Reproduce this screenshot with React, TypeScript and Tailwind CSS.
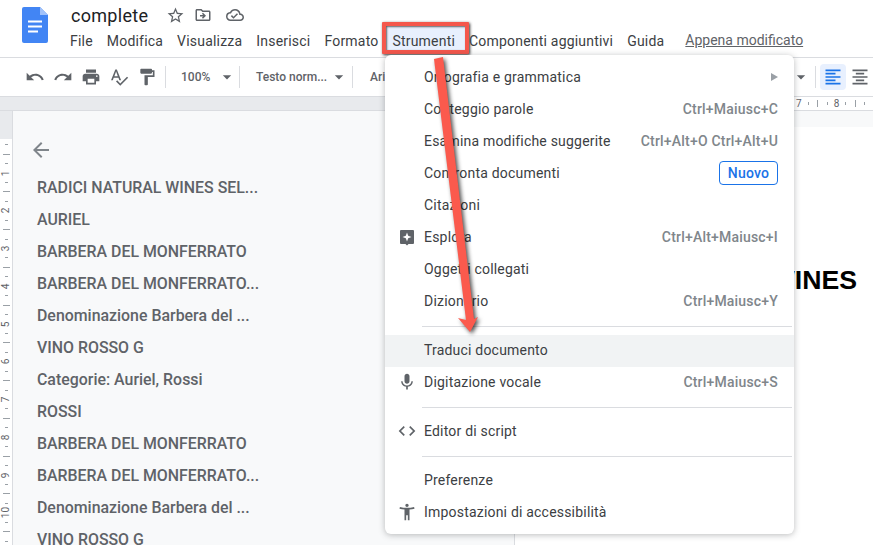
import { ReactNode } from "react";
import {
  MdAccessibilityNew,
  MdArrowBack,
  MdArrowDropDown,
  MdCode,
  MdFormatAlignCenter,
  MdFormatAlignLeft,
  MdFormatPaint,
  MdMic,
  MdOutlineCloudDone,
  MdOutlineDriveFileMove,
  MdPrint,
  MdRedo,
  MdSpellcheck,
  MdStarBorder,
  MdUndo,
} from "react-icons/md";

const menuBar = ["File", "Modifica", "Visualizza", "Inserisci", "Formato", "Strumenti", "Componenti aggiuntivi", "Guida"];

const outline = [
  "RADICI NATURAL WINES SEL...",
  "AURIEL",
  "BARBERA DEL MONFERRATO",
  "BARBERA DEL MONFERRATO...",
  "Denominazione Barbera del ...",
  "VINO ROSSO G",
  "Categorie: Auriel, Rossi",
  "ROSSI",
  "BARBERA DEL MONFERRATO",
  "BARBERA DEL MONFERRATO...",
  "Denominazione Barbera del ...",
  "VINO ROSSO G",
];

function ExploreIcon() {
  return (
    <svg width="16" height="17" viewBox="0 0 16 17">
      <path d="M2 1h12a1 1 0 0 1 1 1v12a1 1 0 0 1-1 1H9.500L8 16.500 6.500 15H2a1 1 0 0 1-1-1V2a1 1 0 0 1 1-1z" fill="#5f6368" />
      <path d="M8 3.500 9.200 6.800 12.500 8 9.200 9.200 8 12.500 6.800 9.200 3.500 8 6.800 6.800z" fill="#fff" />
    </svg>
  );
}

function MenuRow({ label, shortcut, icon, active, lift, right }: { label: string; shortcut?: string; icon?: ReactNode; active?: boolean; lift?: boolean; right?: ReactNode }) {
  return (
    <div className={`flex h-8 items-center pr-4 ${active ? "bg-[#f1f3f4]" : ""} ${lift ? "pb-[2px]" : ""}`}>
      <div className="flex w-[39px] justify-end pr-[6px] text-[#5f6368]">
        <div className="flex w-[22px] justify-center">{icon}</div>
      </div>
      <span className="text-sm tracking-[0.2px] text-[#3c4043]">{label}</span>
      <div className="ml-auto flex items-center text-sm font-medium tracking-[0.2px] text-[#80868b]">
        {shortcut}
        {right}
      </div>
    </div>
  );
}

function Separator({ top, bottom }: { top: string; bottom: string }) {
  return <div className={`ml-[37px] mr-[2px] h-px bg-[#dadce0] ${top} ${bottom}`} />;
}

function ToolsMenu() {
  return (
    <div className="absolute left-[385px] top-[55px] z-10 w-[409px] rounded-md bg-white py-[6px] shadow-[0_1px_6px_rgba(60,64,67,0.35)]">
      <MenuRow label="Ortografia e grammatica" right={<span className="h-0 w-0 border-y-[4px] border-l-[7px] border-y-transparent border-l-[#9aa0a6]" />} />
      <MenuRow label="Conteggio parole" shortcut="Ctrl+Maiusc+C" />
      <MenuRow label="Esamina modifiche suggerite" shortcut="Ctrl+Alt+O Ctrl+Alt+U" />
      <MenuRow
        label="Confronta documenti"
        right={<span className="flex h-6 w-[59px] items-center justify-center rounded border border-[#1a73e8] text-sm text-[#1a73e8]">Nuovo</span>}
      />
      <MenuRow label="Citazioni" />
      <MenuRow label="Esplora" shortcut="Ctrl+Alt+Maiusc+I" icon={<ExploreIcon />} />
      <MenuRow label="Oggetti collegati" />
      <MenuRow label="Dizionario" shortcut="Ctrl+Maiusc+Y" />
      <Separator top="mt-[9px]" bottom="mb-2" />
      <MenuRow label="Traduci documento" active lift />
      <MenuRow label="Digitazione vocale" shortcut="Ctrl+Maiusc+S" icon={<MdMic size={20} />} lift />
      <Separator top="mt-2" bottom="mb-[7px]" />
      <MenuRow label="Editor di script" icon={<MdCode size={20} />} />
      <Separator top="mt-[9px]" bottom="mb-[7px]" />
      <MenuRow label="Preferenze" />
      <MenuRow label="Impostazioni di accessibilità" icon={<MdAccessibilityNew size={20} />} />
    </div>
  );
}

function Arrow() {
  return (
    <svg className="absolute left-[425px] top-[50px] z-20 drop-shadow-[2px_2px_2px_rgba(0,0,0,0.7)]" width="60" height="290" viewBox="425 50 60 290">
      <path d="M434 59 443 57 474 319 478 317 470 332 458 318 466 320z" fill="#fb5a4d" />
    </svg>
  );
}

function Header() {
  return (
    <div className="flex h-[58px] border-b border-[#dadce0] bg-white">
      <div className="pl-[22px] pt-[7px]">
        <svg width="26" height="36" viewBox="0 0 26 36">
          <path d="M2 0h16l8 8v26a2 2 0 0 1-2 2H2a2 2 0 0 1-2-2V2a2 2 0 0 1 2-2z" fill="#4285f4" />
          <path d="M18 0l8 8h-8z" fill="#a1c2fa" />
          <path d="M6 13.500h14v2H6zM6 18.500h14v2H6zM6 23.500h10v2H6z" fill="#fff" />
        </svg>
      </div>
      <div className="ml-[15px] min-w-0 flex-1">
        <div className="flex h-[31px] items-center pb-[2px] pl-2 pt-px text-[#5f6368]">
          <span className="w-[95px] text-[18px] tracking-[0.3px] text-[#202124]">complete</span>
          <MdStarBorder size={19} />
          <MdOutlineDriveFileMove size={18} className="ml-[9px]" />
          <MdOutlineCloudDone size={18} className="ml-[14px]" />
        </div>
        <div className="flex h-5 items-center text-sm text-[#3c4043]">
          {menuBar.map((item) => (
            <div key={item} className="relative px-[7px] tracking-[0.2px]">
              {item === "Strumenti" && (
                <div className="absolute -bottom-[3px] -left-[3px] -right-[7px] -top-[9px] rounded-[1px] border-[4px] border-[#f4574c] bg-[#e8f0fe] shadow-[1px_1px_3px_rgba(0,0,0,0.8),inset_1px_1px_2px_rgba(0,0,0,0.6)]" />
              )}
              <span className="relative">{item}</span>
            </div>
          ))}
          <span className="ml-[14px] pb-[2px] text-sm text-[#5f6368] underline">Appena modificato</span>
        </div>
      </div>
    </div>
  );
}

function Divider() {
  return <div className="h-[22px] w-px bg-[#dadce0]" />;
}

function Toolbar() {
  return (
    <div className="flex h-[39px] items-center border-b border-[#dadce0] bg-white pl-[25px] text-[#5f6368]">
      <div className="flex w-[28px]"><MdUndo size={20} /></div>
      <div className="flex w-[28px]"><MdRedo size={20} /></div>
      <div className="flex w-[28px]"><MdPrint size={20} /></div>
      <div className="flex w-[28px]"><MdSpellcheck size={20} /></div>
      <div className="flex w-[28px]"><MdFormatPaint size={20} /></div>
      <Divider />
      <span className="ml-[15px] w-[35px] text-xs font-medium">100%</span>
      <MdArrowDropDown size={20} className="ml-px" />
      <div className="ml-[2px]"><Divider /></div>
      <span className="ml-[16px] w-[72px] text-xs font-medium">Testo norm...</span>
      <MdArrowDropDown size={20} className="ml-px" />
      <div className="ml-[3px]"><Divider /></div>
      <span className="ml-[17px] w-[428px] text-xs font-medium">Arial</span>
      <MdArrowDropDown size={20} className="-ml-[7px]" />
      <div className="ml-[4px]"><Divider /></div>
      <div className="ml-[4px] flex h-[26px] w-[26px] items-center justify-center rounded bg-[#e8f0fe] text-[#1a73e8]">
        <MdFormatAlignLeft size={20} />
      </div>
      <MdFormatAlignCenter size={20} className="ml-[4px]" />
    </div>
  );
}

function RulerTicks() {
  return (
    <>
      <div className="flex h-[9.45px] items-center justify-center"><div className="h-px w-[3px] bg-[#9aa0a6]" /></div>
      <div className="flex h-[9.45px] items-center justify-center"><div className="h-px w-[7px] bg-[#9aa0a6]" /></div>
      <div className="flex h-[9.45px] items-center justify-center"><div className="h-px w-[3px] bg-[#9aa0a6]" /></div>
    </>
  );
}

function LeftRuler() {
  const units = [1, 2, 3, 4, 5, 6, 7, 8, 9, 10];
  return (
    <div className="w-[13px] shrink-0 border-r border-[#dadce0] bg-white">
      <div className="h-[28px] bg-[#e8eaed]" />
      <div className="pt-px">
        <RulerTicks />
        {units.map((n) => (
          <div key={n}>
            <div className="flex h-[9.45px] items-center justify-center text-[10px] text-[#5f6368]">
              <span className="-rotate-90">{n}</span>
            </div>
            <RulerTicks />
          </div>
        ))}
      </div>
    </div>
  );
}

function Editor() {
  return (
    <div className="flex min-h-0 flex-1 flex-col overflow-hidden">
      <div className="flex h-[14px] shrink-0 border-b border-[#dadce0]">
        <div className="w-[515px] bg-[#e8eaed]" />
        <div className="flex flex-1 items-center bg-white pl-[279px] text-[10px] text-[#5f6368]">
          <span className="w-[9.45px] text-center">7</span>
          <div className="flex w-[9.45px] justify-center"><div className="h-[3px] w-px bg-[#9aa0a6]" /></div>
          <div className="flex w-[9.45px] justify-center"><div className="h-[7px] w-px bg-[#9aa0a6]" /></div>
          <div className="flex w-[9.45px] justify-center"><div className="h-[3px] w-px bg-[#9aa0a6]" /></div>
          <span className="w-[9.45px] text-center">8</span>
          <div className="flex w-[9.45px] justify-center"><div className="h-[3px] w-px bg-[#9aa0a6]" /></div>
          <div className="flex w-[9.45px] justify-center"><div className="h-[7px] w-px bg-[#9aa0a6]" /></div>
          <div className="flex w-[9.45px] justify-center"><div className="h-[3px] w-px bg-[#9aa0a6]" /></div>
        </div>
      </div>
      <div className="flex min-h-0 flex-1">
        <LeftRuler />
        <div className="w-[502px] shrink-0 border-r border-[#dadce0] bg-[#f8f9fa] pl-6 pt-[27px]">
          <MdArrowBack size={24} className="-ml-2 text-[#80868b]" />
          <div className="pt-[10px]">
            {outline.map((row, i) => (
              <div key={i} className="flex h-8 items-center whitespace-nowrap text-[15.9px] font-medium text-[#5f6368]">
                {row}
              </div>
            ))}
          </div>
        </div>
        <div className="flex flex-1 flex-col bg-[#f8f9fa]">
          <div className="h-4 shrink-0" />
          <div className="flex flex-1 justify-end overflow-hidden bg-white pr-4 pt-[138px]">
            <span className="whitespace-nowrap font-['Liberation_Sans',sans-serif] text-[26.67px] font-bold leading-[30px] text-black">NATURAL WINES</span>
          </div>
        </div>
      </div>
    </div>
  );
}

export default function App() {
  return (
    <div className="relative flex h-[545px] w-[873px] flex-col overflow-hidden bg-white font-['Roboto',sans-serif]">
      <Header />
      <Toolbar />
      <Editor />
      <ToolsMenu />
      <Arrow />
    </div>
  );
}
